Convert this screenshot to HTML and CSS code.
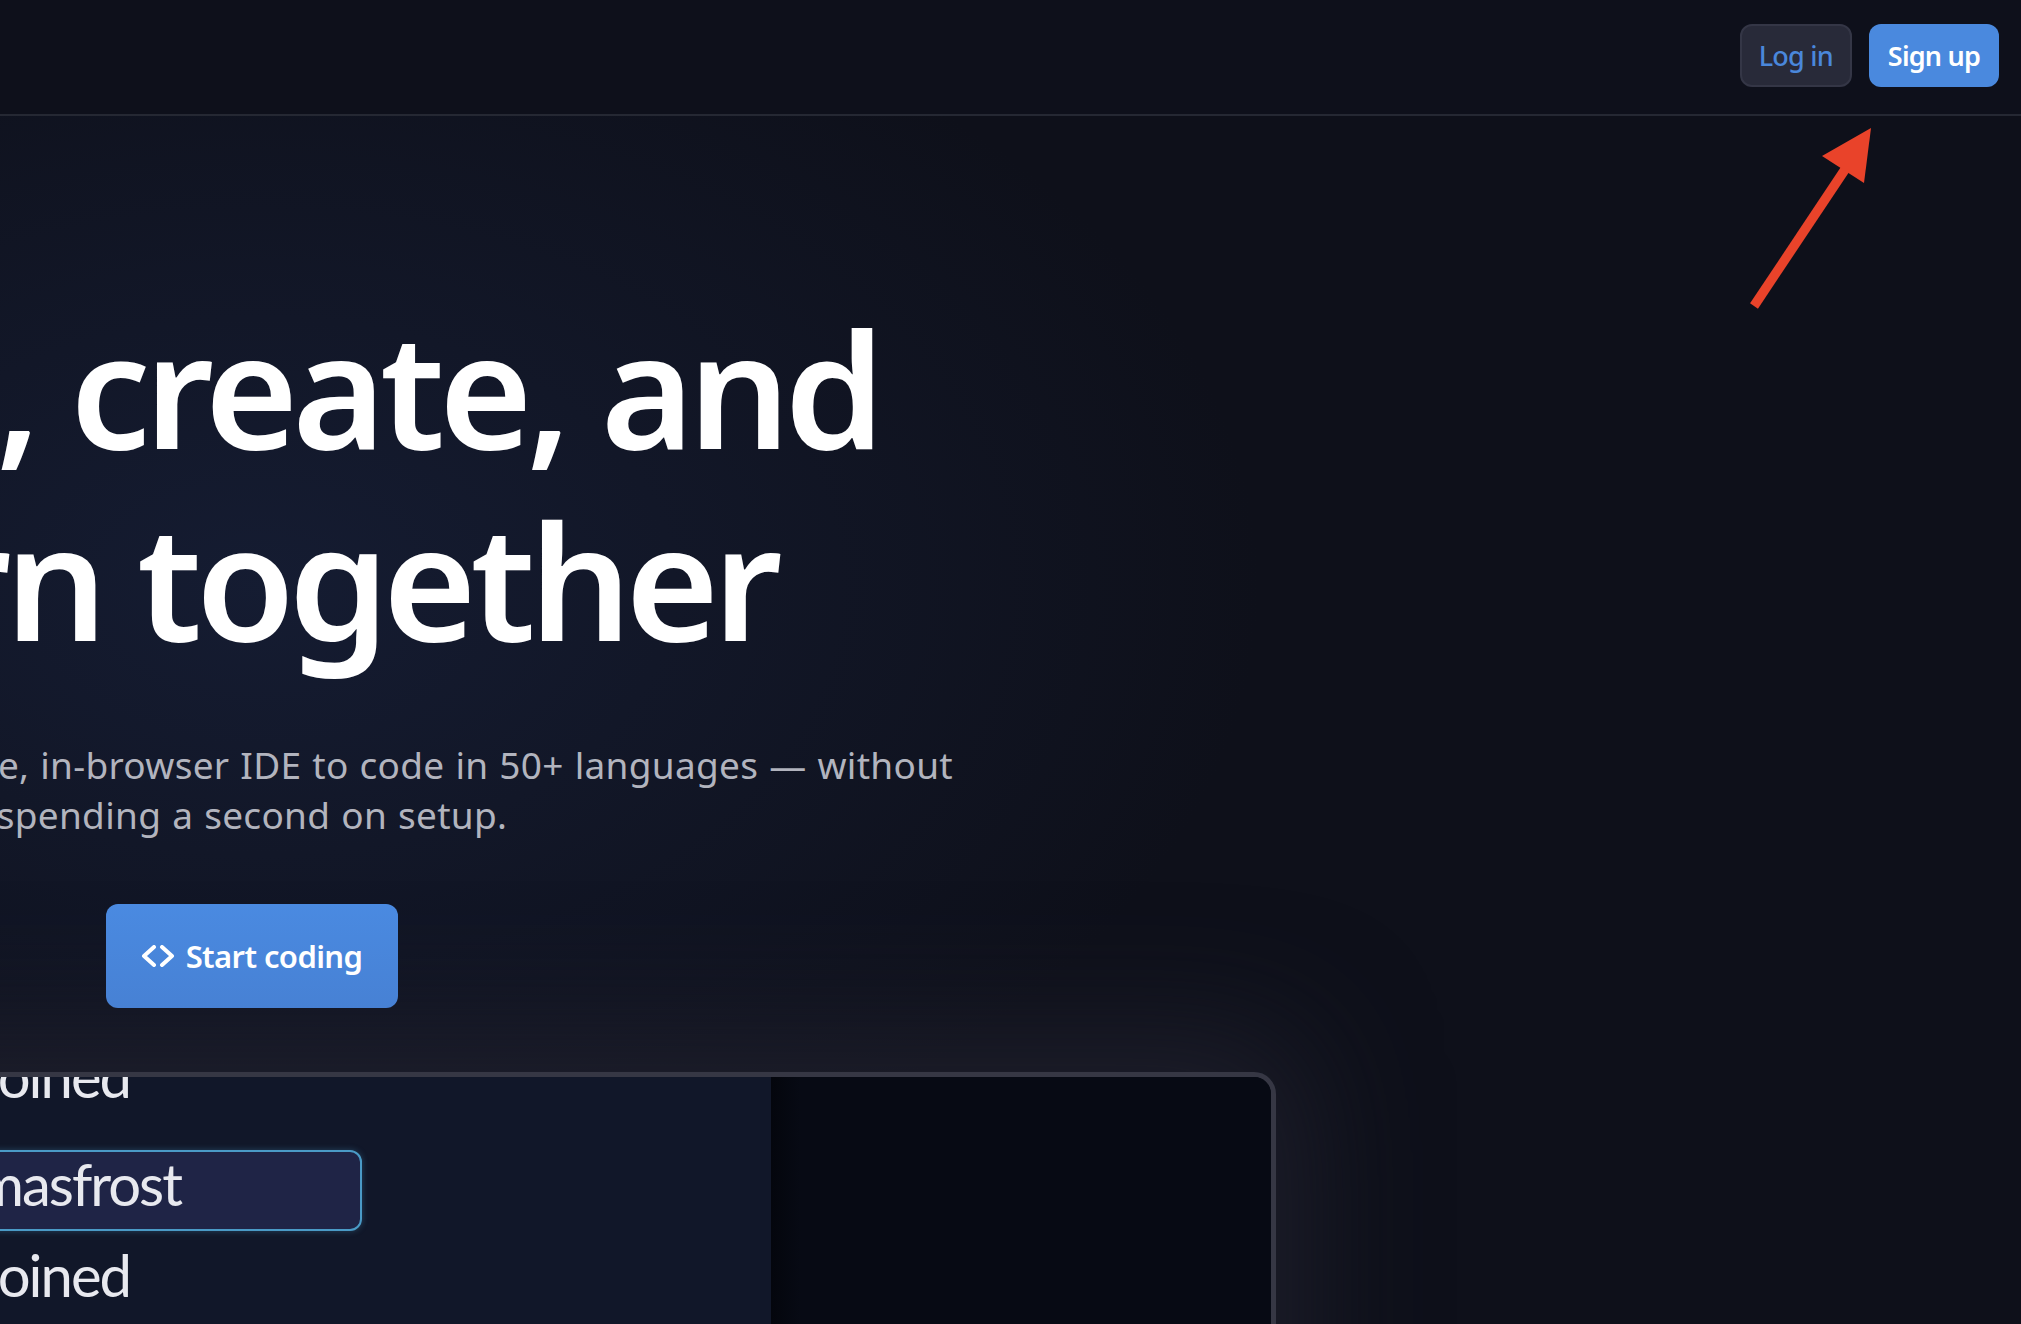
FILE: index.html
```html
<!DOCTYPE html>
<html lang="en">
<head>
<meta charset="utf-8">
<title>Replit</title>
<link rel="stylesheet" href="styles.css">
</head>
<body>
<header class="topbar">
  <a class="btn btn-ghost" href="#">Log in</a>
  <a class="btn btn-primary" href="#">Sign up</a>
</header>
<main class="hero">
  <div class="hero-inner">
    <h1 class="hero-title">Code, create, and<br>learn together</h1>
    <p class="hero-sub">Use our free, collaborative, in-browser IDE to code in 50+ languages — without<br>spending a second on setup.</p>
    <div class="cta-row">
      <a class="btn btn-cta" href="#">
        <svg class="cta-icon" width="34" height="22" viewBox="0 0 34 22" aria-hidden="true">
          <polyline points="13,2 3,11 13,20" fill="none" stroke="#fff" stroke-width="4" stroke-linecap="round" stroke-linejoin="round"/>
          <polyline points="21,2 31,11 21,20" fill="none" stroke="#fff" stroke-width="4" stroke-linecap="round" stroke-linejoin="round"/>
        </svg>
        <span>Start coding</span>
      </a>
    </div>
    <div class="demo">
      <div class="demo-side">
        <div class="feed">
          <div class="feed-row">Jenna joined</div>
          <div class="feed-tag">thomasfrost</div>
          <div class="feed-row feed-row-last">Amjad joined</div>
        </div>
      </div>
      <div class="demo-main"></div>
    </div>
  </div>
</main>
<svg class="annotation" width="160" height="210" viewBox="1730 115 160 210" aria-hidden="true">
  <line x1="1754" y1="306" x2="1846" y2="168" stroke="#e9432a" stroke-width="9.5"/>
  <polygon points="1871,128 1822,156 1864,183" fill="#e9432a"/>
</svg>
</body>
</html>
```

FILE: styles.css
```css
* { box-sizing: border-box; }

html, body {
  margin: 0;
  padding: 0;
}

body {
  width: 2021px;
  height: 1324px;
  overflow: hidden;
  position: relative;
  background: #0e101a;
  color: #ffffff;
  font-family: "Noto Sans", "Open Sans", sans-serif;
}

a { text-decoration: none; }

.topbar {
  display: flex;
  justify-content: flex-end;
  align-items: center;
  gap: 17px;
  padding: 24px 22px 27px;
  background: #0e101b;
  border-bottom: 2px solid #252833;
  position: relative;
  z-index: 2;
}

.btn {
  display: inline-flex;
  align-items: center;
  justify-content: center;
  border-radius: 12px;
  font-family: "Noto Sans", "Open Sans", sans-serif;
  white-space: nowrap;
}

.btn-ghost {
  height: 63px;
  padding: 0 17px;
  background: #282a39;
  border: 2px solid #343646;
  color: #4a87db;
  font-size: 27px;
  font-weight: 500;
  letter-spacing: -0.8px;
}

.btn-primary {
  height: 63px;
  padding: 0 19px;
  background: #4a89de;
  color: #ffffff;
  font-size: 27px;
  font-weight: 600;
  letter-spacing: -0.8px;
}

.hero {
  padding-top: 175px;
  background:
    radial-gradient(ellipse 1000px 650px at 260px 470px, rgba(22, 30, 54, 0.85) 0%, rgba(14, 16, 26, 0) 100%);
}

.hero-inner {
  width: 2048px;
  margin-left: -772px;
  text-align: center;
}

.hero-title {
  margin: 0;
  font-size: 160px;
  line-height: 192px;
  font-weight: 600;
  letter-spacing: -6px;
  color: #ffffff;
}

.hero-sub {
  margin: 65px 0 0;
  font-size: 37px;
  line-height: 50px;
  font-weight: 400;
  letter-spacing: 0.3px;
  word-spacing: 1px;
  color: #b2b4be;
}

.cta-row {
  display: flex;
  justify-content: center;
  margin-top: 64px;
}

.btn-cta {
  height: 104px;
  padding: 0 36px 0 35px;
  gap: 11px;
  background: linear-gradient(180deg, #4a8ae1 0%, #4781d4 100%);
  color: #ffffff;
  font-size: 31px;
  font-weight: 600;
  letter-spacing: -0.6px;
}

.cta-icon { flex: none; }

.demo {
  margin-top: 64px;
  height: 640px;
  border: 5px solid #363744;
  border-radius: 22px;
  overflow: hidden;
  display: grid;
  grid-template-columns: 1538px 1fr;
  text-align: left;
  box-shadow: 0 -10px 130px 25px rgba(36, 36, 50, 0.75);
  background: #070a14;
}

.demo-side {
  background: #111729;
  padding-right: 409px;
  font-family: "Lato", "Noto Sans", sans-serif;
  color: #e8e9ef;
  font-size: 58px;
  line-height: 58px;
  letter-spacing: -2px;
}

.feed {
  margin-top: -30px;
}

.feed-row {
  text-align: right;
  padding-right: 232px;
  white-space: nowrap;
}

.feed-tag {
  margin-top: 45px;
  text-align: right;
  padding: 3px 179px 16px 0;
  background: #1f2446;
  border: 2px solid #4a9ac6;
  border-radius: 12px;
  white-space: nowrap;
  box-shadow: 0 0 6px rgba(74, 154, 198, 0.35);
}

.feed-row-last {
  margin-top: 15px;
}

.demo-main {
  background: linear-gradient(90deg, #04060d 0px, #070a14 30px, #070a14 100%);
}

.annotation {
  position: absolute;
  left: 1730px;
  top: 115px;
  z-index: 3;
  pointer-events: none;
}
```
